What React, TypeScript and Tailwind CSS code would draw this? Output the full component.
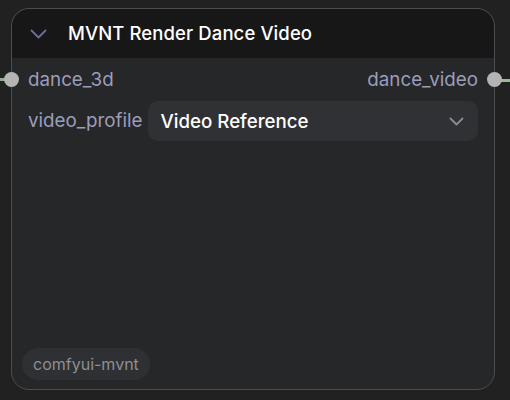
import React from "react";

export default function App() {
  return (
    <div
      className="w-[510px] h-[400px] bg-[#212122] pt-[8px] pl-[11px] overflow-hidden relative"
      style={{ fontFamily: "Inter, 'Noto Sans', sans-serif" }}
    >
      {/* connection stubs */}
      <div className="absolute left-0 top-[78px] w-[6px] h-[3px] bg-[#8fae8f]" />
      <div className="absolute left-[500px] top-[79px] w-[10px] h-[3px] bg-[#9ab89a]" />
      <div className="relative w-[484px] h-[382px] rounded-[18px] border border-[#4c4c52] bg-[#262729] flex flex-col">
        <div className="h-[49px] rounded-t-[18px] bg-[#171718] flex items-center pl-[18px] gap-[21px]">
          <svg width="17" height="10" viewBox="0 0 17 10" fill="none" stroke="#6e6e94" strokeWidth="1.8" strokeLinecap="round" strokeLinejoin="round">
            <path d="M1.5 1.5l7 7 7-7" />
          </svg>
          <span className="text-[18.5px] text-white font-medium tracking-[0.1px]">MVNT Render Dance Video</span>
        </div>
        <div className="flex flex-col px-[16px] pt-[11px] flex-1">
          <div className="flex items-center justify-between h-[22px] text-[18.8px] text-[#9d9dbb]">
            <span>dance_3d</span>
            <span>dance_video</span>
          </div>
          <div className="flex items-center mt-[10px] gap-[5px]">
            <span className="text-[18.8px] text-[#9d9dbb]">video_profile</span>
            <div className="flex-1 h-[40px] rounded-[10px] bg-[#303135] flex items-center justify-between pl-[13px] pr-[14px]">
              <span className="text-[18.7px] text-white font-medium leading-[40px] pt-[1px]">Video Reference</span>
              <svg width="15" height="9" viewBox="0 0 15 9" fill="none" stroke="#8c8c8c" strokeWidth="1.8" strokeLinecap="round" strokeLinejoin="round">
                <path d="M1.5 1.5l6 6 6-6" />
              </svg>
            </div>
          </div>
          <div className="flex-1" />
          <div className="mb-[9px] -ml-[6px]">
            <span className="inline-flex items-center h-[32px] px-[11px] rounded-full bg-[#2f3033] text-[16px] text-[#8e8e90]">
              comfyui-mvnt
            </span>
          </div>
        </div>
        <div className="absolute left-[-8px] top-[63px] w-[15px] h-[15px] rounded-full bg-[#b4b4b4]" />
        <div className="absolute left-[475px] top-[63px] w-[15px] h-[15px] rounded-full bg-[#b4b4b4]" />
      </div>
    </div>
  );
}
